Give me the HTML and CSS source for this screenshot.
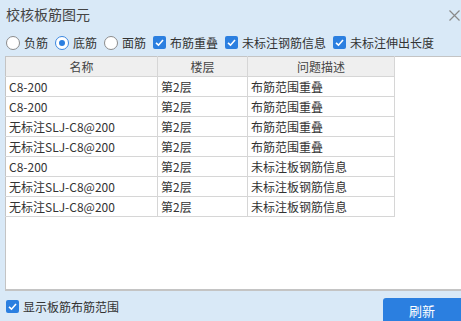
FILE: index.html
```html
<!DOCTYPE html>
<html lang="zh">
<head>
<meta charset="utf-8">
<link rel="stylesheet" href="styles.css">
</head>
<body>
<div class="dialog">
  <div class="titlebar">
    <span class="title">校核板筋图元</span>
    <span class="close"><svg width="11" height="11" viewBox="0 0 11 11"><path d="M0.5 0.5L10.5 10.5M10.5 0.5L0.5 10.5" stroke="#8a8a8a" stroke-width="1.2" fill="none"/></svg></span>
  </div>
  <div class="options">
    <label class="opt"><span class="radio"></span>负筋</label>
    <label class="opt"><span class="radio on"></span>底筋</label>
    <label class="opt"><span class="radio"></span>面筋</label>
    <label class="opt"><span class="check"><svg width="13" height="13" viewBox="0 0 13 13"><path d="M3 6.8L5.5 9.2L10 4" stroke="#fff" stroke-width="1.6" fill="none"/></svg></span>布筋重叠</label>
    <label class="opt"><span class="check"><svg width="13" height="13" viewBox="0 0 13 13"><path d="M3 6.8L5.5 9.2L10 4" stroke="#fff" stroke-width="1.6" fill="none"/></svg></span>未标注钢筋信息</label>
    <label class="opt"><span class="check"><svg width="13" height="13" viewBox="0 0 13 13"><path d="M3 6.8L5.5 9.2L10 4" stroke="#fff" stroke-width="1.6" fill="none"/></svg></span>未标注伸出长度</label>
  </div>
  <div class="panel">
    <table class="grid">
      <thead>
        <tr><th class="c1">名称</th><th class="c2">楼层</th><th class="c3">问题描述</th></tr>
      </thead>
      <tbody>
        <tr><td>C8-200</td><td>第2层</td><td>布筋范围重叠</td></tr>
        <tr><td>C8-200</td><td>第2层</td><td>布筋范围重叠</td></tr>
        <tr><td>无标注SLJ-C8@200</td><td>第2层</td><td>布筋范围重叠</td></tr>
        <tr><td>无标注SLJ-C8@200</td><td>第2层</td><td>布筋范围重叠</td></tr>
        <tr><td>C8-200</td><td>第2层</td><td>未标注板钢筋信息</td></tr>
        <tr><td>无标注SLJ-C8@200</td><td>第2层</td><td>未标注板钢筋信息</td></tr>
        <tr><td>无标注SLJ-C8@200</td><td>第2层</td><td>未标注板钢筋信息</td></tr>
      </tbody>
    </table>
  </div>
  <div class="footer">
    <label class="opt"><span class="check"><svg width="13" height="13" viewBox="0 0 13 13"><path d="M3 6.8L5.5 9.2L10 4" stroke="#fff" stroke-width="1.6" fill="none"/></svg></span>显示板筋布筋范围</label>
    <button class="btn">刷新</button>
  </div>
</div>
</body>
</html>
```
FILE: styles.css
```css
* { box-sizing: border-box; }
html, body {
  margin: 0;
  padding: 0;
  width: 461px;
  height: 321px;
  overflow: hidden;
  background: #d9e9f7;
  font-family: "Noto Sans CJK SC", "Noto Sans", sans-serif;
  color: #333;
}
.dialog {
  display: flex;
  flex-direction: column;
  height: 321px;
}
.titlebar {
  height: 30px;
  display: flex;
  align-items: center;
  justify-content: space-between;
  padding: 0 1px 2px 6px;
}
.title {
  font-size: 14px;
  color: #444;
  line-height: 20px;
}
.close {
  display: flex;
  width: 11px;
  height: 11px;
  margin-top: 2px;
}
.options {
  height: 26px;
  display: flex;
  align-items: center;
  padding-left: 6px;
  padding-bottom: 1px;
  gap: 7px;
}
.opt {
  display: flex;
  align-items: center;
  font-size: 12px;
  line-height: 16px;
  color: #333;
  gap: 4px;
}
.radio {
  width: 14px;
  height: 14px;
  border-radius: 50%;
  border: 1px solid #8c8c8c;
  background: #fff;
  display: inline-block;
  position: relative;
}
.radio.on {
  border-color: #3b87e0;
}
.radio.on::after {
  content: "";
  position: absolute;
  left: 3px;
  top: 3px;
  width: 6px;
  height: 6px;
  border-radius: 50%;
  background: #2b7fe0;
}
.check {
  width: 13px;
  height: 13px;
  border-radius: 2px;
  background: #2b7fe0;
  display: inline-flex;
}
.panel {
  margin-left: 5px;
  height: 235px;
  background: #fff;
  border-top: 1px solid #c4c4c4;
  border-left: 1px solid #c4c4c4;
  border-bottom: 2px solid #c4c4c4;
}
.grid {
  border-collapse: collapse;
  font-size: 12px;
  margin-top: -1px;
  margin-left: -1px;
}
.grid th, .grid td {
  border: 1px solid #d6d6d6;
  height: 20px;
  padding: 0 3px;
  font-weight: normal;
  white-space: nowrap;
  line-height: 18px;
}
.grid th {
  background: #efefef;
  color: #444;
  text-align: center;
  border-top-color: #c4c4c4;
  border-left-color: #c4c4c4;
}
.grid td:first-child { border-left-color: #c4c4c4; }
.c1 { width: 152px; }
.c2 { width: 90px; }
.c3 { width: 147px; }
.footer {
  flex: 1;
  display: flex;
  align-items: flex-end;
  justify-content: space-between;
  padding-left: 6px;
}
.footer .opt {
  align-self: center;
  margin-top: 1px;
}
.btn {
  width: 78px;
  height: 23px;
  border: none;
  border-radius: 3px 0 0 0;
  background: #2b7fe0;
  color: #fff;
  font-family: "Noto Sans CJK SC", sans-serif;
  font-size: 13px;
  padding: 3px 0 0 0;
  line-height: 20px;
}
```
